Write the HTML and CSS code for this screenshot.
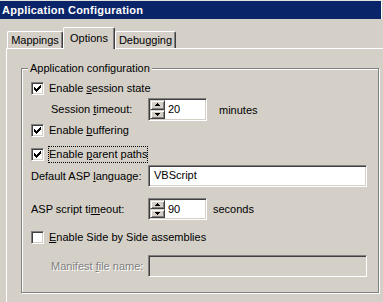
FILE: index.html
```html
<!DOCTYPE html>
<html lang="en">
<head>
    <meta charset="UTF-8">
    <meta name="viewport" content="width=device-width, initial-scale=1.0">
    <title>Application Configuration</title>
    <link rel="stylesheet" href="styles.css">
</head>
<body>
    <div class="titlebar">Application Configuration</div>

    <div class="tabs">
        <div class="tab tab-mappings">Mappings</div>
        <div class="tab tab-options active">Options</div>
        <div class="tab tab-debugging">Debugging</div>
    </div>

    <div class="panel">
        <fieldset class="group">
            <legend>Application configuration</legend>

            <div class="row row-check row-1">
                <span class="checkbox">
                    <svg width="7" height="7" viewBox="0 0 7 7" shape-rendering="crispEdges">
                        <rect x="6" y="0" width="1" height="1"/><rect x="5" y="1" width="2" height="1"/>
                        <rect x="0" y="2" width="1" height="1"/><rect x="4" y="2" width="3" height="1"/>
                        <rect x="0" y="3" width="2" height="1"/><rect x="3" y="3" width="3" height="1"/>
                        <rect x="0" y="4" width="5" height="1"/><rect x="1" y="5" width="3" height="1"/>
                        <rect x="2" y="6" width="1" height="1"/>
                    </svg>
                </span>
                <span class="text">Enable <u>s</u>ession state</span>
            </div>

            <div class="row row-spin row-2 indent">
                <span class="label">Session <u>t</u>imeout:</span>
                <div class="spin">
                    <div class="spin-buttons">
                        <span class="spin-btn"><svg width="5" height="3" viewBox="0 0 5 3" shape-rendering="crispEdges"><rect x="2" y="0" width="1" height="1"/><rect x="1" y="1" width="3" height="1"/><rect x="0" y="2" width="5" height="1"/></svg></span>
                        <span class="spin-btn"><svg width="5" height="3" viewBox="0 0 5 3" shape-rendering="crispEdges"><rect x="0" y="0" width="5" height="1"/><rect x="1" y="1" width="3" height="1"/><rect x="2" y="2" width="1" height="1"/></svg></span>
                    </div>
                    <span class="spin-value">20</span>
                </div>
                <span class="unit unit-minutes">minutes</span>
            </div>

            <div class="row row-check row-3">
                <span class="checkbox">
                    <svg width="7" height="7" viewBox="0 0 7 7" shape-rendering="crispEdges">
                        <rect x="6" y="0" width="1" height="1"/><rect x="5" y="1" width="2" height="1"/>
                        <rect x="0" y="2" width="1" height="1"/><rect x="4" y="2" width="3" height="1"/>
                        <rect x="0" y="3" width="2" height="1"/><rect x="3" y="3" width="3" height="1"/>
                        <rect x="0" y="4" width="5" height="1"/><rect x="1" y="5" width="3" height="1"/>
                        <rect x="2" y="6" width="1" height="1"/>
                    </svg>
                </span>
                <span class="text">Enable <u>b</u>uffering</span>
            </div>

            <div class="row row-check row-4">
                <span class="checkbox">
                    <svg width="7" height="7" viewBox="0 0 7 7" shape-rendering="crispEdges">
                        <rect x="6" y="0" width="1" height="1"/><rect x="5" y="1" width="2" height="1"/>
                        <rect x="0" y="2" width="1" height="1"/><rect x="4" y="2" width="3" height="1"/>
                        <rect x="0" y="3" width="2" height="1"/><rect x="3" y="3" width="3" height="1"/>
                        <rect x="0" y="4" width="5" height="1"/><rect x="1" y="5" width="3" height="1"/>
                        <rect x="2" y="6" width="1" height="1"/>
                    </svg>
                </span>
                <span class="text focused">Enable <u>p</u>arent paths</span>
            </div>

            <div class="row row-field row-5">
                <span class="label">Default ASP <u>l</u>anguage:</span>
                <div class="field">VBScript</div>
            </div>

            <div class="row row-spin row-6">
                <span class="label">ASP script ti<u>m</u>eout:</span>
                <div class="spin">
                    <div class="spin-buttons">
                        <span class="spin-btn"><svg width="5" height="3" viewBox="0 0 5 3" shape-rendering="crispEdges"><rect x="2" y="0" width="1" height="1"/><rect x="1" y="1" width="3" height="1"/><rect x="0" y="2" width="5" height="1"/></svg></span>
                        <span class="spin-btn"><svg width="5" height="3" viewBox="0 0 5 3" shape-rendering="crispEdges"><rect x="0" y="0" width="5" height="1"/><rect x="1" y="1" width="3" height="1"/><rect x="2" y="2" width="1" height="1"/></svg></span>
                    </div>
                    <span class="spin-value">90</span>
                </div>
                <span class="unit unit-seconds">seconds</span>
            </div>

            <div class="row row-check row-7">
                <span class="checkbox"></span>
                <span class="text"><u>E</u>nable Side by Side assemblies</span>
            </div>

            <div class="row row-field row-8 indent">
                <span class="label disabled">Manifest <u>f</u>ile name:</span>
                <div class="field field-disabled"></div>
            </div>
        </fieldset>
    </div>
</body>
</html>
```

FILE: styles.css
```css
body {
    margin: 0;
    width: 383px;
    height: 302px;
    overflow: hidden;
    background-color: #d4d0c8;
    color: #000;
    font-family: "Liberation Sans", Arial, sans-serif;
    font-size: 11px;
}

/* title bar */
.titlebar {
    height: 18px;
    border-top: 1px solid #e4e2dc;
    border-right: 1px solid #fff;
    margin-right: 1px;
    background-color: #0a246a;
    color: #fff;
    font-weight: bold;
    letter-spacing: 0.25px;
    line-height: 19px;
    padding-left: 2px;
}

/* tabs */
.tabs {
    display: flex;
    align-items: flex-end;
    height: 21px;
    margin-top: 8px;
    padding-left: 7px;
    position: relative;
    z-index: 1;
}
.tab {
    box-sizing: border-box;
    height: 17px;
    border-top: 1px solid #fff;
    border-left: 1px solid #fff;
    border-right: 1px solid #404040;
    border-top-left-radius: 2px;
    border-top-right-radius: 2px;
    box-shadow: inset -1px 0 #808080;
    background-color: #d4d0c8;
    text-align: center;
    line-height: 13px;
    padding-top: 2px;
}
.tab-mappings {
    width: 56px;
}
.tab-options {
    width: 52px;
}
.tab-debugging {
    width: 61px;
}
.tab.active {
    height: 22px;
    margin-bottom: -1px;
    padding-top: 4px;
    position: relative;
    z-index: 2;
}

/* page */
.panel {
    margin-left: 6px;
    height: 260px;
    border-top: 1px solid #fff;
    border-left: 1px solid #fff;
}

.group {
    box-sizing: border-box;
    width: 358px;
    margin: 13px 0 0 14px;
    padding: 0 0 15px 0;
    min-width: 0;
    border: 1px solid #808080;
    box-shadow: inset 1px 1px #fff, 1px 1px #fff;
}
.group legend {
    margin-left: 6px;
    padding: 0 2px;
    line-height: 13px;
    background-color: #d4d0c8;
}

.row {
    display: flex;
    align-items: center;
    padding-left: 9px;
}
.row.indent {
    padding-left: 29px;
}
.row-check {
    height: 13px;
}
.row-1 { margin-top: 7px; }
.row-2 { margin-top: 3px; height: 23px; }
.row-3 { margin-top: 3px; }
.row-4 { margin-top: 11px; }
.row-5 { margin-top: 4px; height: 22px; }
.row-6 { margin-top: 11px; height: 22px; }
.row-7 { margin-top: 11px; }
.row-8 { margin-top: 11px; height: 22px; }

.checkbox {
    box-sizing: border-box;
    width: 13px;
    height: 13px;
    margin-right: 5px;
    padding: 2px 0 0 2px;
    background-color: #fff;
    border: 1px solid;
    border-color: #808080 #fff #fff #808080;
    box-shadow: inset 1px 1px #404040, inset -1px -1px #d4d0c8;
}
.checkbox svg {
    display: block;
}

.text {
    line-height: 13px;
}
.text.focused {
    border: 1px dotted #000;
    padding: 1px 0;
    margin-left: -1px;
}

.label {
    width: 117px;
    line-height: 13px;
    white-space: nowrap;
}
.indent .label {
    width: 97px;
}
.label.disabled {
    color: #808080;
    text-shadow: 1px 1px #fff;
}

/* sunken boxes */
.spin,
.field {
    box-sizing: border-box;
    height: 100%;
    background-color: #fff;
    border: 1px solid;
    border-color: #808080 #fff #fff #808080;
    box-shadow: inset 1px 1px #404040, inset -1px -1px #d4d0c8;
}
.spin {
    display: flex;
    width: 59px;
    padding: 1px;
}
.spin-buttons {
    display: flex;
    flex-direction: column;
    width: 15px;
}
.spin-btn {
    flex: 1;
    display: flex;
    align-items: center;
    justify-content: center;
    background-color: #d4d0c8;
    border: 1px solid;
    border-color: #d4d0c8 #404040 #404040 #d4d0c8;
    box-shadow: inset 1px 1px #fff, inset -1px -1px #808080;
}
.spin-value {
    align-self: center;
    padding-left: 3px;
    line-height: 13px;
}
.unit-minutes {
    margin-left: 12px;
}
.unit-seconds {
    margin-left: 6px;
}

.field {
    width: 219px;
    padding-left: 5px;
    line-height: 18px;
}
.field-disabled {
    background-color: #d4d0c8;
}
```
